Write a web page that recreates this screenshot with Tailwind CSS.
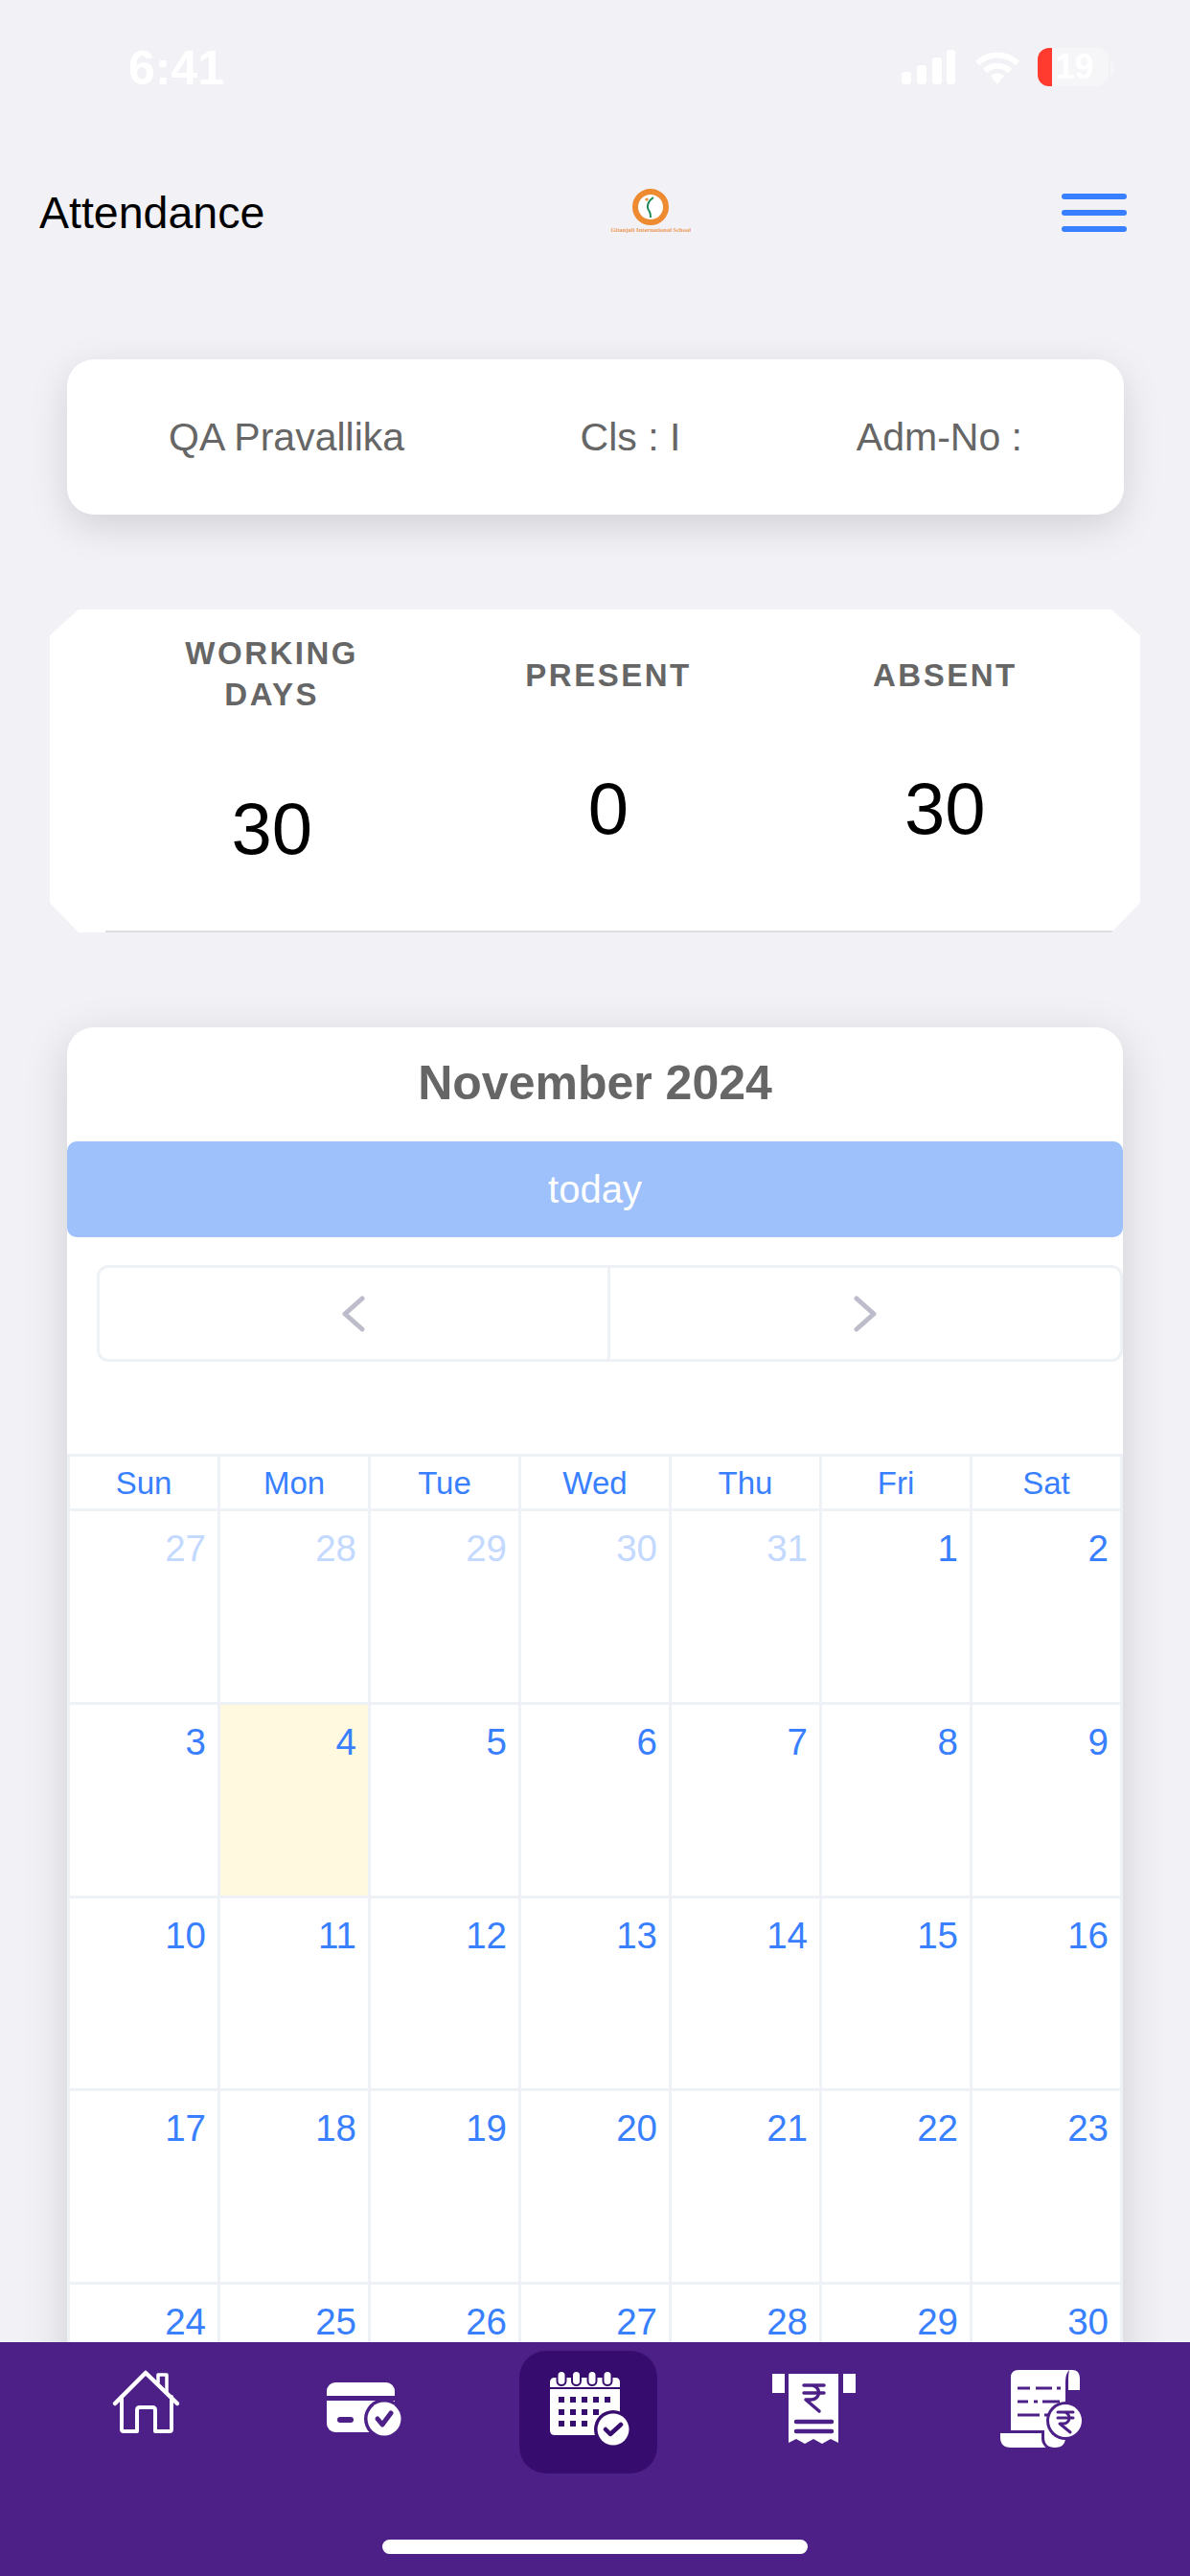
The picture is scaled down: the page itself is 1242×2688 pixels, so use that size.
<!DOCTYPE html>
<html lang="en">
<head>
    <meta charset="UTF-8">
    <meta name="viewport" content="width=device-width, initial-scale=1.0">
    <title>Attendance</title>
    <script src="https://cdn.jsdelivr.net/npm/@tailwindcss/browser@4"></script>
</head>
<body class="bg-[#f1f1f6] font-['Liberation_Sans',Arial,sans-serif]">
<div class="relative w-[1242px] h-[2688px] overflow-hidden flex flex-col">

    <!-- status bar -->
    <div class="h-[132px] shrink-0 flex items-start text-white pt-[46px] pl-[134px]">
        <span class="text-[50px] leading-[50px] font-bold">6:41</span>
        <div class="ml-auto mr-[79px] mt-[6px] flex items-start">
            <svg class="w-[56px] h-[36px]" viewBox="0 0 56 36" fill="#fff">
                <rect x="0" y="23" width="10" height="13" rx="3"/>
                <rect x="16" y="16" width="10" height="20" rx="3"/>
                <rect x="32" y="8" width="10" height="28" rx="3"/>
                <rect x="47" y="0" width="9" height="36" rx="3"/>
            </svg>
            <svg class="ml-[20px] w-[48px] h-[36px]" viewBox="0 0 48 36" fill="none" stroke="#fff">
                <path d="M3 14A30 30 0 0 1 45 14" stroke-width="6"/>
                <path d="M11 22A19 19 0 0 1 37 22" stroke-width="6"/>
                <path d="M24 36L17 27A10 10 0 0 1 31 27Z" fill="#fff" stroke="none"/>
            </svg>
            <div class="relative ml-[18px] -mt-[2px] w-[74px] h-[40px] rounded-[12px] bg-white/40 overflow-hidden flex items-center justify-center pl-[3px]">
                <div class="absolute left-0 top-0 h-full w-[15px] bg-[#ff3b30]"></div>
                <span class="text-[36px] leading-[40px] font-bold">19</span>
            </div>
            <div class="ml-[2px] mt-[12px] w-[4px] h-[14px] rounded-r-full bg-white/40"></div>
        </div>
    </div>

    <!-- header -->
    <div class="h-[180px] shrink-0 flex items-center pl-[41px] pr-[66px]">
        <h1 class="pt-[2px] text-[46.5px] text-black font-normal">Attendance</h1>
        <div class="ml-[361px] w-[84px] flex flex-col items-center -mt-[3px]">
            <svg class="w-[38px] h-[38px]" viewBox="0 0 38 38" fill="none">
                <circle cx="19" cy="19" r="16" fill="#fff" stroke="#ee8a2f" stroke-width="6"/>
                <path d="M22 9C16 13 14 19 18 24C19 26 19 28 19 30" stroke="#1e8a5a" stroke-width="2"/>
                <circle cx="15" cy="11" r="1.6" fill="#ee8a2f"/>
            </svg>
            <span class="mt-[1px] text-[6.5px] leading-[8px] whitespace-nowrap font-bold text-[#ee9a55] font-['Liberation_Serif',serif]">Gitanjali International School</span>
        </div>
        <div class="ml-auto w-[68px] flex flex-col gap-[11px]">
            <div class="h-[6px] rounded-full bg-[#3880ff]"></div>
            <div class="h-[6px] rounded-full bg-[#3880ff]"></div>
            <div class="h-[6px] rounded-full bg-[#3880ff]"></div>
        </div>
    </div>

    <!-- student info -->
    <div class="mt-[63px] ml-[70px] w-[1103px] h-[162px] shrink-0 bg-white rounded-[28px] shadow-[0_12px_40px_rgba(0,0,0,0.13)] flex items-center justify-between pt-[2px] pl-[106px] pr-[106px] text-[41px] text-[#666]">
        <span>QA Pravallika</span>
        <span>Cls : I</span>
        <span>Adm-No :</span>
    </div>

    <!-- totals -->
    <div class="relative mt-[99px] ml-[52px] w-[1138px] h-[337px] shrink-0 bg-white pl-[56px] pr-[28px] grid grid-cols-3 items-start text-center [clip-path:polygon(30px_0,calc(100%-30px)_0,100%_27px,100%_calc(100%-31px),calc(100%-30px)_100%,30px_100%,0_calc(100%-31px),0_27px)]">
        <div class="pt-[24px]">
            <div class="text-[33px] leading-[43px] font-bold tracking-[2.5px] text-[#666]">WORKING<br>DAYS</div>
            <div class="mt-[74px] text-[76px] leading-[90px] text-black">30</div>
        </div>
        <div class="pt-[47px]">
            <div class="text-[33px] leading-[43px] font-bold tracking-[2.5px] text-[#666]">PRESENT</div>
            <div class="mt-[73px] text-[76px] leading-[90px] text-black">0</div>
        </div>
        <div class="pt-[47px]">
            <div class="text-[33px] leading-[43px] font-bold tracking-[2.5px] text-[#666]">ABSENT</div>
            <div class="mt-[73px] text-[76px] leading-[90px] text-black">30</div>
        </div>
        <div class="absolute left-[58px] bottom-0 w-[1051px] h-[2px] bg-[#dcdce1]"></div>
    </div>

    <!-- calendar -->
    <div class="mt-[99px] ml-[70px] w-[1102px] h-[1700px] shrink-0 bg-white rounded-[28px] shadow-[0_12px_48px_rgba(0,0,0,0.14)]">
        <div class="h-[114px] mb-[5px] pt-[2px] flex items-center justify-center text-[50px] font-bold text-[#666]">November 2024</div>
        <div class="h-[100px] rounded-[10px] bg-[#9fc1fb] flex items-center justify-center text-[40px] text-white">today</div>
        <div class="mt-[29px] ml-[31px] h-[101px] grid grid-cols-2 border-[3px] border-[#eef1f5] rounded-[12px]">
            <div class="flex items-center justify-center border-r-[3px] border-[#eef1f5]">
                <svg class="w-[24px] h-[38px]" viewBox="0 0 24 38" fill="none" stroke="#bcbccb" stroke-width="5" stroke-linecap="round" stroke-linejoin="round"><path d="M21 3L3 19L21 35"/></svg>
            </div>
            <div class="flex items-center justify-center">
                <svg class="w-[24px] h-[38px]" viewBox="0 0 24 38" fill="none" stroke="#bcbccb" stroke-width="5" stroke-linecap="round" stroke-linejoin="round"><path d="M3 3L21 19L3 35"/></svg>
            </div>
        </div>

        <div class="mt-[96px] p-[3px] grid grid-cols-7 gap-[3px] bg-[#eef1f5] text-[#3880ff]">
            <div class="h-[54px] pt-[2px] bg-white flex items-center justify-center text-[33px]">Sun</div>
            <div class="h-[54px] pt-[2px] bg-white flex items-center justify-center text-[33px]">Mon</div>
            <div class="h-[54px] pt-[2px] bg-white flex items-center justify-center text-[33px]">Tue</div>
            <div class="h-[54px] pt-[2px] bg-white flex items-center justify-center text-[33px]">Wed</div>
            <div class="h-[54px] pt-[2px] bg-white flex items-center justify-center text-[33px]">Thu</div>
            <div class="h-[54px] pt-[2px] bg-white flex items-center justify-center text-[33px]">Fri</div>
            <div class="h-[54px] pt-[2px] bg-white flex items-center justify-center text-[33px]">Sat</div>

            <div class="h-[198.75px] bg-white text-right pt-[16px] pr-[12px] text-[38.5px] leading-[46px] text-[#c3d9ff]">27</div>
            <div class="h-[198.75px] bg-white text-right pt-[16px] pr-[12px] text-[38.5px] leading-[46px] text-[#c3d9ff]">28</div>
            <div class="h-[198.75px] bg-white text-right pt-[16px] pr-[12px] text-[38.5px] leading-[46px] text-[#c3d9ff]">29</div>
            <div class="h-[198.75px] bg-white text-right pt-[16px] pr-[12px] text-[38.5px] leading-[46px] text-[#c3d9ff]">30</div>
            <div class="h-[198.75px] bg-white text-right pt-[16px] pr-[12px] text-[38.5px] leading-[46px] text-[#c3d9ff]">31</div>
            <div class="h-[198.75px] bg-white text-right pt-[16px] pr-[12px] text-[38.5px] leading-[46px]">1</div>
            <div class="h-[198.75px] bg-white text-right pt-[16px] pr-[12px] text-[38.5px] leading-[46px]">2</div>

            <div class="h-[198.75px] bg-white text-right pt-[16px] pr-[12px] text-[38.5px] leading-[46px]">3</div>
            <div class="h-[198.75px] bg-[#fff9df] text-right pt-[16px] pr-[12px] text-[38.5px] leading-[46px]">4</div>
            <div class="h-[198.75px] bg-white text-right pt-[16px] pr-[12px] text-[38.5px] leading-[46px]">5</div>
            <div class="h-[198.75px] bg-white text-right pt-[16px] pr-[12px] text-[38.5px] leading-[46px]">6</div>
            <div class="h-[198.75px] bg-white text-right pt-[16px] pr-[12px] text-[38.5px] leading-[46px]">7</div>
            <div class="h-[198.75px] bg-white text-right pt-[16px] pr-[12px] text-[38.5px] leading-[46px]">8</div>
            <div class="h-[198.75px] bg-white text-right pt-[16px] pr-[12px] text-[38.5px] leading-[46px]">9</div>

            <div class="h-[198.75px] bg-white text-right pt-[16px] pr-[12px] text-[38.5px] leading-[46px]">10</div>
            <div class="h-[198.75px] bg-white text-right pt-[16px] pr-[12px] text-[38.5px] leading-[46px]">11</div>
            <div class="h-[198.75px] bg-white text-right pt-[16px] pr-[12px] text-[38.5px] leading-[46px]">12</div>
            <div class="h-[198.75px] bg-white text-right pt-[16px] pr-[12px] text-[38.5px] leading-[46px]">13</div>
            <div class="h-[198.75px] bg-white text-right pt-[16px] pr-[12px] text-[38.5px] leading-[46px]">14</div>
            <div class="h-[198.75px] bg-white text-right pt-[16px] pr-[12px] text-[38.5px] leading-[46px]">15</div>
            <div class="h-[198.75px] bg-white text-right pt-[16px] pr-[12px] text-[38.5px] leading-[46px]">16</div>

            <div class="h-[198.75px] bg-white text-right pt-[16px] pr-[12px] text-[38.5px] leading-[46px]">17</div>
            <div class="h-[198.75px] bg-white text-right pt-[16px] pr-[12px] text-[38.5px] leading-[46px]">18</div>
            <div class="h-[198.75px] bg-white text-right pt-[16px] pr-[12px] text-[38.5px] leading-[46px]">19</div>
            <div class="h-[198.75px] bg-white text-right pt-[16px] pr-[12px] text-[38.5px] leading-[46px]">20</div>
            <div class="h-[198.75px] bg-white text-right pt-[16px] pr-[12px] text-[38.5px] leading-[46px]">21</div>
            <div class="h-[198.75px] bg-white text-right pt-[16px] pr-[12px] text-[38.5px] leading-[46px]">22</div>
            <div class="h-[198.75px] bg-white text-right pt-[16px] pr-[12px] text-[38.5px] leading-[46px]">23</div>

            <div class="h-[198.75px] bg-white text-right pt-[16px] pr-[12px] text-[38.5px] leading-[46px]">24</div>
            <div class="h-[198.75px] bg-white text-right pt-[16px] pr-[12px] text-[38.5px] leading-[46px]">25</div>
            <div class="h-[198.75px] bg-white text-right pt-[16px] pr-[12px] text-[38.5px] leading-[46px]">26</div>
            <div class="h-[198.75px] bg-white text-right pt-[16px] pr-[12px] text-[38.5px] leading-[46px]">27</div>
            <div class="h-[198.75px] bg-white text-right pt-[16px] pr-[12px] text-[38.5px] leading-[46px]">28</div>
            <div class="h-[198.75px] bg-white text-right pt-[16px] pr-[12px] text-[38.5px] leading-[46px]">29</div>
            <div class="h-[198.75px] bg-white text-right pt-[16px] pr-[12px] text-[38.5px] leading-[46px]">30</div>
        </div>
    </div>

    <!-- bottom tabs -->
    <div class="absolute left-0 bottom-0 w-full h-[244px] bg-[#4d2087] pt-[9px] pl-[36px] pr-[51px]">
        <div class="grid grid-cols-5">
            <!-- home -->
            <div class="h-[128px] flex justify-center pt-[20px]">
                <svg class="w-[96px] h-[88px] overflow-visible" viewBox="0 0 96 88" fill="none" stroke="#fff" stroke-linecap="round" stroke-linejoin="round">
                    <path d="M16 35L48 3L81 35" stroke-width="4.5"/>
                    <path d="M23 28V62Q23 64 25 64H39V42Q39 39 42 39H55Q58 39 58 42V64H73Q75 64 75 62V28" stroke-width="4"/>
                    <path d="M61 13V5H70V24" stroke-width="3.5"/>
                </svg>
            </div>
            <!-- fee card -->
            <div class="h-[128px] flex justify-center pt-[20px]">
                <svg class="w-[96px] h-[88px] overflow-visible" viewBox="0 0 96 88">
                    <rect x="6" y="13" width="71" height="52" rx="9" fill="#fff"/>
                    <rect x="6" y="27" width="71" height="5" fill="#4d2087"/>
                    <rect x="17" y="49" width="17" height="6" rx="3" fill="#4d2087"/>
                    <circle cx="66" cy="51" r="21" fill="#4d2087"/>
                    <rect x="45" y="65" width="42" height="10" fill="#4d2087"/>
                    <circle cx="66" cy="51" r="17.5" fill="#fff"/>
                    <path d="M59 51L64 57L73 45" fill="none" stroke="#4d2087" stroke-width="5" stroke-linecap="round" stroke-linejoin="round"/>
                </svg>
            </div>
            <!-- attendance, active tab -->
            <div class="h-[128px] flex justify-center">
                <div class="w-[144px] h-[128px] rounded-[28px] bg-[#360c6e] flex justify-center pt-[20px]">
                    <svg class="w-[96px] h-[88px] overflow-visible" viewBox="0 0 96 88">
                        <path d="M8 18V13Q8 8 13 8H76Q81 8 81 13V18Z" fill="#fff"/>
                        <path d="M8 20H81V63Q81 68 76 68H13Q8 68 8 63Z" fill="#fff"/>
                        <g fill="#fff" stroke="#360c6e" stroke-width="2">
                            <rect x="15.5" y="1" width="9" height="15" rx="4.5"/>
                            <rect x="31" y="1" width="9" height="15" rx="4.5"/>
                            <rect x="47.5" y="1" width="9" height="15" rx="4.5"/>
                            <rect x="63.5" y="1" width="9" height="15" rx="4.5"/>
                        </g>
                        <g fill="#360c6e">
                            <rect x="17" y="28" width="6" height="6"/><rect x="29" y="28" width="6" height="6"/><rect x="41" y="28" width="6" height="6"/><rect x="53" y="28" width="6" height="6"/><rect x="65" y="28" width="6" height="6"/>
                            <rect x="17" y="41" width="6" height="6"/><rect x="29" y="41" width="6" height="6"/><rect x="41" y="41" width="6" height="6"/><rect x="53" y="41" width="6" height="6"/>
                            <rect x="17" y="53" width="6" height="6"/><rect x="29" y="53" width="6" height="6"/><rect x="41" y="53" width="6" height="6"/>
                            <circle cx="74" cy="62" r="20"/>
                        </g>
                        <circle cx="74" cy="62" r="16.5" fill="#fff"/>
                        <path d="M66 62L71 67L82 57" fill="none" stroke="#360c6e" stroke-width="4.5" stroke-linecap="round" stroke-linejoin="round"/>
                    </svg>
                </div>
            </div>
            <!-- fee receipt -->
            <div class="h-[128px] flex justify-center pt-[20px]">
                <svg class="w-[96px] h-[88px] overflow-visible" viewBox="0 0 96 88">
                    <rect x="9" y="4" width="13" height="20" fill="#fff"/>
                    <rect x="83" y="4" width="13" height="20" fill="#fff"/>
                    <path d="M26 4H78V76L70 72L61 77L52 72L43 77L34 72L26 76Z" fill="#fff"/>
                    <path d="M42 16H63M42 24H63M44 16H50A7.5 7.5 0 0 1 50 31H44L58 43" fill="none" stroke="#4d2087" stroke-width="3.5" stroke-linecap="round" stroke-linejoin="round"/>
                    <path d="M34 54H71M34 64H71" fill="none" stroke="#4d2087" stroke-width="4.5" stroke-linecap="round"/>
                </svg>
            </div>
            <!-- bill -->
            <div class="h-[128px] flex justify-center pt-[20px]">
                <svg class="w-[96px] h-[88px] overflow-visible" viewBox="0 0 96 88">
                    <path d="M27 63V8Q27 0 35 0H88Q84 4 84 12V70Q84 81 73 81Q62 81 62 70V63Z" fill="#fff"/>
                    <path d="M88 0H91Q99 0 99 9V21H87V9Q87 4 88 0Z" fill="#fff"/>
                    <path d="M15 65H60V72Q60 77 66 82H27Q15 82 15 70Z" fill="#fff" stroke="#4d2087" stroke-width="2"/>
                    <path d="M34 19H47M53 19H70M75 19H79M34 33H45M51 33H55M60 33H78M34 47H57M62 47H70" fill="none" stroke="#4d2087" stroke-width="3"/>
                    <circle cx="84" cy="53" r="20" fill="#4d2087"/>
                    <circle cx="84" cy="53" r="17" fill="#fff"/>
                    <path d="M76 44H92M76 50H92M78 44H82A6 6 0 0 1 82 56H78L89 65" fill="none" stroke="#4d2087" stroke-width="3" stroke-linecap="round" stroke-linejoin="round"/>
                </svg>
            </div>
        </div>
        <div class="absolute left-[399px] bottom-[23px] w-[444px] h-[15px] rounded-full bg-white"></div>
    </div>
</div>
</body>
</html>
